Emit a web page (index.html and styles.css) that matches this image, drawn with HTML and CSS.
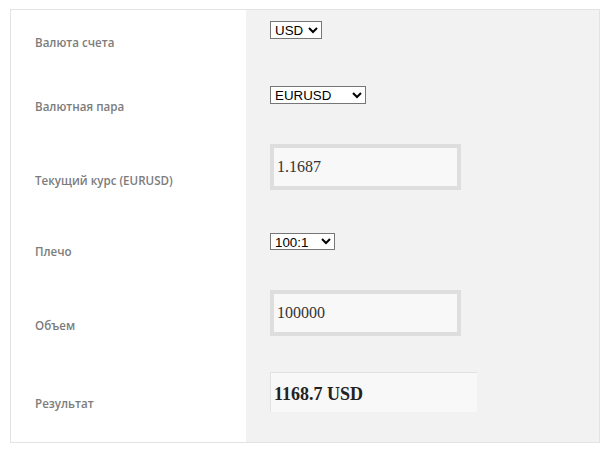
FILE: index.html
```html
<!DOCTYPE html>
<html lang="ru">
<head>
    <meta charset="UTF-8">
    <meta name="viewport" content="width=device-width, initial-scale=1.0">
    <title>Калькулятор маржи</title>
    <link rel="stylesheet" href="styles.css">
</head>
<body>
    <div class="calc">
        <div class="row row-1">
            <div class="label">Валюта счета</div>
            <div class="field">
                <select class="sel-currency">
                    <option>USD</option>
                    <option>EUR</option>
                </select>
            </div>
        </div>
        <div class="row row-2">
            <div class="label">Валютная пара</div>
            <div class="field">
                <select class="sel-pair">
                    <option>EURUSD</option>
                    <option>GBPUSD</option>
                </select>
            </div>
        </div>
        <div class="row row-3">
            <div class="label">Текущий курс (EURUSD)</div>
            <div class="field">
                <input type="text" class="box" value="1.1687">
            </div>
        </div>
        <div class="row row-4">
            <div class="label">Плечо</div>
            <div class="field">
                <select class="sel-leverage">
                    <option>100:1</option>
                    <option>50:1</option>
                </select>
            </div>
        </div>
        <div class="row row-5">
            <div class="label">Объем</div>
            <div class="field">
                <input type="text" class="box" value="100000">
            </div>
        </div>
        <div class="row row-6">
            <div class="label">Результат</div>
            <div class="field">
                <div class="result">1168.7 USD</div>
            </div>
        </div>
    </div>
</body>
</html>
```

FILE: styles.css
```css
* {
    margin: 0;
    padding: 0;
    box-sizing: border-box;
}

body {
    padding: 9px 0 0 10px;
    background: #fff;
    font-family: 'Open Sans', 'Liberation Sans', sans-serif;
}

.calc {
    width: 590px;
    border: 1px solid #e3e3e3;
}

.row {
    display: grid;
    grid-template-columns: 235px 1fr;
}

.row-1 { height: 65px; }
.row-2 { height: 62px; }
.row-3 { height: 86px; }
.row-4 { height: 57px; }
.row-5 { height: 90px; }
.row-6 { height: 72px; }

.label {
    display: flex;
    align-items: center;
    padding-left: 24px;
    font-size: 11.6px;
    font-weight: 600;
    color: #7c7c7c;
}

.row-6 .label {
    padding-bottom: 5px;
}

.field {
    background: #f2f2f2;
    padding-left: 24px;
}

.row-1 .field,
.row-2 .field { padding-top: 11px; }
.row-3 .field { padding-top: 7px; }
.row-4 .field { padding-top: 10px; }
.row-5 .field { padding-top: 10px; }
.row-6 .field { padding-top: 2px; }

select {
    display: block;
    height: 18px;
    font-family: 'Liberation Sans', Arial, sans-serif;
    font-size: 13.33px;
    color: #000;
    background: #fff;
    border: 1px solid #767676;
    border-radius: 0;
}

.sel-currency { width: 52px; }
.sel-pair { width: 96px; }
.sel-leverage { width: 65px; height: 17px; }

.box {
    display: block;
    width: 191px;
    height: 46px;
    padding: 0 3px;
    border: 4px solid #dedede;
    background: #f8f8f8;
    font-family: 'Liberation Serif', 'Times New Roman', serif;
    font-size: 16px;
    color: #333;
    outline: none;
}

.result {
    width: 207px;
    height: 40px;
    padding: 11px 0 0 3px;
    border-top: 1px solid #e2e2e2;
    border-left: 1px solid #e2e2e2;
    background: #f8f8f8;
    font-family: 'Liberation Serif', 'Times New Roman', serif;
    font-size: 18px;
    font-weight: bold;
    color: #222;
}
```
